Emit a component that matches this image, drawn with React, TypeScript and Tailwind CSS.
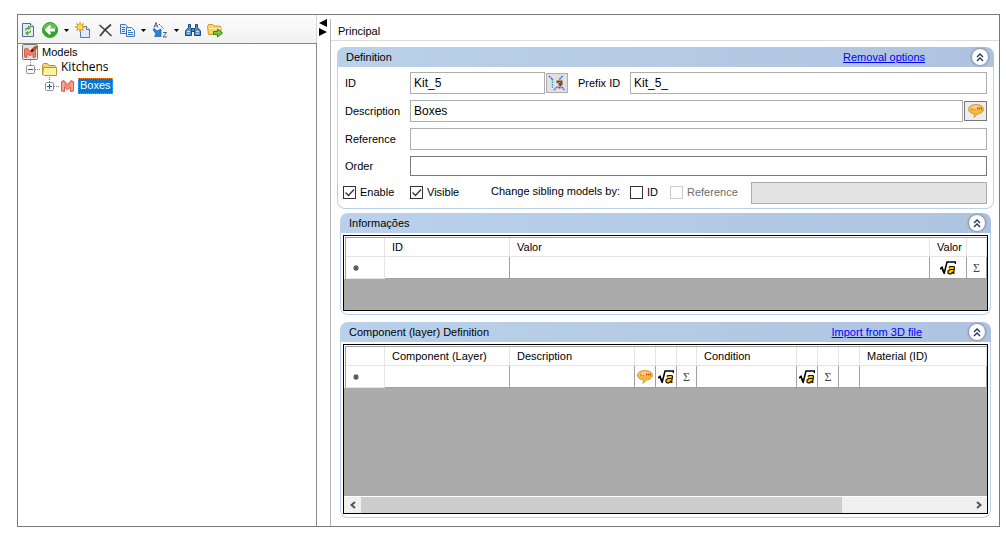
import React, { useState } from 'react';

const RefreshIcon = () => (
  <svg width="16" height="16" viewBox="0 0 16 16" fill="none">
    <path d="M2.500 1.500h8l3 3v10h-11z" fill="#e3edf7" stroke="#4f6f92" />
    <path d="M10.500 1.500v3h3" fill="#fff" stroke="#4f6f92" />
    <path d="M5.500 8.500c0-2 1-2.500 3.500-2.500M8 4l2 2-2 1.500M10.500 8.500c0 2-1 2.500-3.500 2.500M8 9.500L6 11l2 2" stroke="#5aa62a" strokeWidth="1.300" />
  </svg>
);

const BackIcon = () => (
  <svg width="16" height="16" viewBox="0 0 16 16">
    <circle cx="8" cy="8" r="7.500" fill="#2fa52c" stroke="#3f9a34" />
    <path d="M1.500 7a6.500 6 0 0 1 13 0c-3 1-9 1-13 0z" fill="#62c44e" />
    <path d="M7.500 3L2.500 8l5 5L9.300 11.300 7.500 9.500H13v-3H7.500l1.800-1.800z" fill="#fff" />
  </svg>
);

const NewIcon = () => (
  <svg width="16" height="16" viewBox="0 0 16 16">
    <path d="M5.500 4.500h6l3 3v8h-9z" fill="#dfeafb" stroke="#5779ad" />
    <path d="M11.500 4.500v3h3" fill="#fff" stroke="#5779ad" />
    <path d="M5 0v10M0 5h10M1.500 1.500l7 7M8.500 1.500l-7 7" stroke="#e79a20" strokeWidth="1.500" />
    <circle cx="5" cy="5" r="2.500" fill="#ffe46b" stroke="#f0ac2c" />
  </svg>
);

const DeleteIcon = () => (
  <svg width="16" height="16" viewBox="0 0 16 16" fill="none" stroke="#3c3c3c">
    <path d="M2.500 3C6 6 10 9.500 14.500 14" strokeWidth="1.500" />
    <path d="M14 2.500C9.500 6 6 9.500 3 14" strokeWidth="1.800" />
  </svg>
);

const CopyIcon = () => (
  <svg width="16" height="16" viewBox="0 0 16 16" stroke="#3e76bd">
    <path d="M1.500 2.500h5l2 2v7h-7z" fill="#d9e9fb" />
    <path d="M3 5.500h3M3 7.500h3M3 9.500h3" />
    <path d="M7.500 5.500h5l3 3v6h-8z" fill="#e8f2fd" />
    <path d="M9 8.500h3M9 10.500h5M9 12.500h5" />
  </svg>
);

const SortIcon = () => (
  <svg width="16" height="16" viewBox="0 0 16 16">
    <path d="M2 5.500L4 .5l2 5M2.800 4h2.500" fill="none" stroke="#4f5f75" />
    <path d="M7 2l5 5" stroke="#444" strokeDasharray="1.500 1" />
    <path d="M1 7.500l1.500-1L5 9l4-2v7.500H2.500L4 12z" fill="#2385dc" stroke="#1559a8" strokeWidth="0.700" />
    <path d="M11 10.500h3.500L11 15h4" fill="none" stroke="#4f5f75" />
  </svg>
);

const BinocularsIcon = () => (
  <svg width="16" height="16" viewBox="0 0 16 16" fill="#5a8fcb" stroke="#1d447c">
    <path d="M3.500 2.500h2v3l1 2v6H.500V9l3-3.500z" />
    <path d="M10.500 2.500h2v3l3 3.500v4.500h-6v-6l1-2z" />
    <path d="M6.500 6.500h3v3h-3z" />
    <path d="M2 9.500h3M11 9.500h3M2.500 11.500h2M11.500 11.500h2" stroke="#dce9f8" />
  </svg>
);

const FolderGoIcon = () => (
  <svg width="16" height="16" viewBox="0 0 16 16">
    <path d="M1.500 12.500l-1-8 1-2h4l1.500 1.500h6l1 2v6.500z" fill="#f6d766" stroke="#cf9b2c" />
    <path d="M2 6.500h12" stroke="#fff2b5" />
    <path d="M6.500 9.500h4v-2.500l5 4-5 4v-2.500h-4z" fill="#78c93c" stroke="#34851f" />
  </svg>
);

const FolderIcon = () => (
  <svg width="17" height="16" viewBox="0 0 17 16" stroke="#b99432">
    <path d="M1.500 13.500v-9l1-2h4l1.500 2h6v2h-8z" fill="#f3d46d" />
    <path d="M3.500 6.500h12v8h-12l-2-1 1-7z" fill="#fff0a2" />
  </svg>
);

const ModelIcon = () => (
  <svg width="15" height="14" viewBox="0 0 15 14">
    <path d="M1.500 2.500l2.500-1 3.500 4 3.500-4 2.500 1v9.500l-3 .500V8l-3 3-3-3v4.500l-3-.500z" fill="#f28b7a" stroke="#d9604c" />
    <path d="M3 4v7M12 4v7" stroke="#ffc4b8" />
  </svg>
);

const ModelsRootIcon = () => (
  <svg width="16" height="16" viewBox="0 0 16 16">
    <rect x="0.500" y="0.500" width="15" height="15" rx="1" fill="#e6e2e2" stroke="#777" />
    <path d="M2.500 5l2.500-1 3 3.500L11 4l2.500 1v8l-2.500.500V9.500L8 12 5 9.500v4L2.500 13z" fill="#f07f6c" stroke="#d9604c" />
    <path d="M8.500 7L12 2.500l3-1v3L10.500 8z" fill="#a65a28" />
    <path d="M8.500 7.500L10 5l2 1.500L10 8z" fill="#2b1a12" />
  </svg>
);

const BalloonIcon = () => (
  <svg width="16" height="16" viewBox="0 0 16 16">
    <path d="M8 1.500c4.200 0 7.500 2 7.500 4.800 0 2.500-2.500 4.300-6 4.700L6 14.500l.500-3.500C3 10.500.500 8.800.500 6.300.500 3.500 3.800 1.500 8 1.500z" fill="#f7b92e" stroke="#c48a35" strokeWidth="0.800" />
    <path d="M1.500 5.800C2.500 1 13.500 1 14.500 5.800 12 7.500 4 7.500 1.500 5.800z" fill="#fbc98a" />
    <path d="M3.500 4.500v2h2M6 6.500h1.500" fill="none" stroke="#c88b50" />
    <path d="M9 5.500h5" stroke="#e04a1c" strokeWidth="2" strokeDasharray="1.500 0.500" />
  </svg>
);

const GraphHelpIcon = () => (
  <svg width="18" height="18" viewBox="0 0 18 18" fill="none">
    <path d="M1 2l4 4M14.500 2l-3.500 4M6 16l4-4M12 11l4.500 5" stroke="#2e58dc" strokeWidth="1.300" strokeDasharray="2 0.700" />
    <path d="M4.500 5v10" stroke="#20a4dc" strokeWidth="1.400" strokeDasharray="1.500 1" />
    <path d="M9.500 9V7.500h4V10h-2v1.500" stroke="#7d4518" strokeWidth="2" />
    <path d="M10.500 12.500h2v2h-2z" fill="#7d4518" />
  </svg>
);

const FormulaIcon = () => (
  <svg width="16" height="16" viewBox="0 0 16 16" fill="none">
    <path d="M0 9l2-1.500L4 13" stroke="#000" strokeWidth="1.800" />
    <path d="M4 14L7 2h8.500v2" stroke="#000" strokeWidth="1.500" />
    <path d="M8.500 8V6.500h6.500l-1 7.500H8l-.500-2.500L9 9.500z" fill="#fbc400" />
    <path d="M9 7.500L10 6.500h4l.500 1-1 6h1M13.500 9.500H10L8 11v2l1 .800h2l2-1.800" stroke="#1c1600" strokeWidth="1.200" />
  </svg>
);

const StarMark = () => (
  <svg width="6" height="6" viewBox="0 0 6 6" className="ml-[7px]">
    <path d="M3 0v6M0 3h6M1 1l4 4M5 1L1 5" stroke="#555" strokeWidth="1.200" />
  </svg>
);

const DropArrow = ({ label }: { label: string }) => (
  <button aria-label={label}>
    <svg width="5" height="16" viewBox="0 0 5 16">
      <path d="M0 7h5L2.500 10z" fill="#000" />
    </svg>
  </button>
);

const Toolbar = () => (
  <div className="flex h-7 items-center gap-1.5 border-r border-[#d5d5d5] pl-0.5 pt-0.5 bg-linear-to-b from-[#fdfdfd] to-[#f1f1f1]">
    <button aria-label="Refresh"><RefreshIcon /></button>
    <button aria-label="Back"><BackIcon /></button>
    <DropArrow label="Back history" />
    <button aria-label="New"><NewIcon /></button>
    <button aria-label="Delete"><DeleteIcon /></button>
    <button aria-label="Copy"><CopyIcon /></button>
    <DropArrow label="Copy options" />
    <button aria-label="Sort"><SortIcon /></button>
    <DropArrow label="Sort options" />
    <button aria-label="Find"><BinocularsIcon /></button>
    <button aria-label="Move to folder"><FolderGoIcon /></button>
  </div>
);

interface ExpanderProps {
  open: boolean;
  label: string;
  onClick: () => void;
}

const Expander = ({ open, label, onClick }: ExpanderProps) => (
  <button aria-label={label} aria-expanded={open} onClick={onClick}>
    <svg width="19" height="17" viewBox="0 0 19 17" fill="none">
      <path d="M8.500 0v5M13 9.500h6" stroke="#808080" strokeDasharray="1 1" />
      <rect x="4.500" y="5.500" width="8" height="8" rx="1" fill="#fafafa" stroke="#8f8f8f" />
      <path d="M6 9.500h5" stroke="#3a53a4" />
      {!open && <path d="M8.500 7v5" stroke="#3a53a4" />}
    </svg>
  </button>
);

const ModelTree = () => {
  const [folderOpen, setFolderOpen] = useState(true);
  const [boxesOpen, setBoxesOpen] = useState(false);

  return (
    <div className="flex-1 border-t border-r border-[#828790] bg-white pl-1">
      <div className="flex h-4 items-center gap-1">
        <ModelsRootIcon />
        <span>Models</span>
      </div>
      <div className="flex h-[17px] items-center">
        <Expander open={folderOpen} label="Toggle Kitchens" onClick={() => setFolderOpen(!folderOpen)} />
        <FolderIcon />
        <span className="pb-1 pl-[3px] font-['Open_Sans',sans-serif] text-xs leading-[14px]">Kitchens</span>
      </div>
      {folderOpen && (
        <div className="flex h-[17px] items-center pl-[19px]">
          <Expander open={boxesOpen} label="Toggle Boxes" onClick={() => setBoxesOpen(!boxesOpen)} />
          <ModelIcon />
          <button className="ml-[3px] h-4 border border-dotted border-[#ff8728] bg-[#0078d7] px-px leading-[13px] text-white">
            Boxes
          </button>
        </div>
      )}
    </div>
  );
};

interface GroupProps {
  title: string;
  link?: string;
  className: string;
  children: React.ReactNode;
}

const Group = ({ title, link, className, children }: GroupProps) => {
  const [open, setOpen] = useState(true);

  return (
    <section className={className}>
      <div className="flex h-5 items-center rounded-t-lg bg-linear-to-r from-[#bad1eb] to-[#aec3df] pl-[9px] pr-1.5">
        <h2 className="flex-1">{title}</h2>
        {link && (
          <a href="#" className="mr-[47px] text-[#0000ff] underline">{link}</a>
        )}
        <button
          aria-label={`Collapse ${title}`}
          onClick={() => setOpen(!open)}
          className="flex size-4 items-center justify-center rounded-full bg-white shadow-[0_0_2px_1px_#848a9e]"
        >
          <svg width="8" height="9" viewBox="0 0 8 9" fill="none" stroke="#1c3668" strokeWidth="1.400">
            <path d="M1 4l3-3 3 3M1 8l3-3 3 3" />
          </svg>
        </button>
      </div>
      {open && (
        <div className="rounded-b-lg border border-t-0 border-[#b9d1ea]">{children}</div>
      )}
    </section>
  );
};

interface CheckProps {
  label: string;
  className: string;
  checked?: boolean;
  disabled?: boolean;
}

const Check = ({ label, className, checked, disabled }: CheckProps) => (
  <label className={`flex items-center gap-1 ${className}`}>
    <span className="relative flex size-[13px] shrink-0">
      <input
        type="checkbox"
        defaultChecked={checked}
        disabled={disabled}
        className="peer size-[13px] appearance-none border border-[#333] bg-white disabled:border-[#ccc]"
      />
      <svg
        viewBox="0 0 13 13"
        fill="none"
        stroke="#333"
        strokeWidth="1.300"
        className="pointer-events-none absolute inset-0 hidden size-[13px] peer-checked:block"
      >
        <path d="M2.500 6.500l3 3 5.500-6" />
      </svg>
    </span>
    {label}
  </label>
);

const labelClass = 'w-[67px] shrink-0 pl-0.5';
const inputClass = 'h-[22px] min-w-0 flex-1 border border-[#abadb3] bg-white px-[3px] text-xs outline-none';

const DefinitionForm = () => (
  <form className="flex flex-col gap-1.5 pt-[5px] pr-1.5 pb-1 pl-[5px]">
    <div className="flex items-center">
      <label htmlFor="model-id" className={labelClass}>ID</label>
      <input id="model-id" defaultValue="Kit_5" className="h-[22px] w-[135px] border border-[#abadb3] bg-white px-[3px] text-xs outline-none" />
      <button type="button" aria-label="Generate ID" className="ml-px flex h-5 w-[22px] items-center justify-center border border-[#adadad] bg-[#e1e1e1]">
        <GraphHelpIcon />
      </button>
      <label htmlFor="prefix-id" className="w-[62px] shrink-0 pl-2.5">Prefix ID</label>
      <input id="prefix-id" defaultValue="Kit_5_" className={inputClass} />
    </div>
    <div className="flex items-center">
      <label htmlFor="description" className={labelClass}>Description</label>
      <input id="description" defaultValue="Boxes" className={inputClass} />
      <button type="button" aria-label="Translate description" className="ml-px flex h-5 w-[23px] items-center justify-center border border-[#777] bg-[#eee]">
        <BalloonIcon />
      </button>
    </div>
    <div className="flex items-center">
      <label htmlFor="reference" className={labelClass}>Reference</label>
      <input id="reference" className={inputClass} />
    </div>
    <div className="flex items-center">
      <label htmlFor="order" className={labelClass}>Order</label>
      <input id="order" className="h-5 min-w-0 flex-1 border border-[#7a7a7a] bg-white px-[3px] text-xs outline-none" />
    </div>
    <div className="flex items-start">
      <Check label="Enable" checked className="w-[67px] pt-[3px]" />
      <Check label="Visible" checked className="w-[81px] pt-[3px]" />
      <span className="w-[139px] pt-0.5">Change sibling models by:</span>
      <Check label="ID" className="w-10 pt-[3px]" />
      <Check label="Reference" disabled className="w-[81px] pt-[3px] text-[#6d6d6d]" />
      <input
        aria-label="Sibling reference"
        disabled
        className="h-[22px] min-w-0 flex-1 border border-[#abadb3] bg-[#e3e3e3]"
      />
    </div>
  </form>
);

interface Column {
  title: string;
  width: string;
  cell?: React.ReactNode;
}

const sigma = <span className="font-['Liberation_Serif',serif] text-xs text-[#444]">Σ</span>;
const formula = <FormulaIcon />;

const infoColumns: Column[] = [
  { title: 'ID', width: 'w-[125px]' },
  { title: 'Valor', width: 'w-auto' },
  { title: 'Valor', width: 'w-[37px]', cell: formula },
  { title: '', width: 'w-5', cell: sigma },
];

const layerColumns: Column[] = [
  { title: 'Component (Layer)', width: 'w-[125px]' },
  { title: 'Description', width: 'w-[125px]' },
  { title: '', width: 'w-[21px]', cell: <BalloonIcon /> },
  { title: '', width: 'w-[21px]', cell: formula },
  { title: '', width: 'w-5', cell: sigma },
  { title: 'Condition', width: 'w-[100px]' },
  { title: '', width: 'w-[21px]', cell: formula },
  { title: '', width: 'w-[21px]', cell: sigma },
  { title: '', width: 'w-[21px]' },
  { title: 'Material (ID)', width: 'w-auto' },
];

const DataGrid = ({ columns }: { columns: Column[] }) => (
  <div className="bg-white pt-px pl-px">
    <table className="w-full table-fixed border-separate border-spacing-0 border-t border-l border-[#a0a0a0]">
      <thead>
        <tr className="h-[19px]">
          <th aria-label="Row" className="w-[39px] border-r border-b border-[#e5e5e5] p-0"></th>
          {columns.map((column, index) => (
            <th
              key={index}
              className={`${column.width} overflow-hidden border-r border-b border-[#e5e5e5] p-0 text-left font-normal whitespace-nowrap`}
            >
              <span className="pl-[7px]">{column.title}</span>
            </th>
          ))}
        </tr>
      </thead>
      <tbody>
        <tr className="h-[22px]">
          <td className="border-r border-b border-[#e5e5e5] p-0"><StarMark /></td>
          {columns.map((column, index) => (
            <td key={index} className="h-[22px] border-r border-b border-[#a0a0a0] p-0">
              <div className="flex items-center justify-center">{column.cell}</div>
            </td>
          ))}
        </tr>
      </tbody>
    </table>
  </div>
);

const ScrollBar = () => (
  <div className="flex h-[17px] border-t border-white bg-[#f0f0f0]">
    <button aria-label="Scroll left" className="flex w-[17px] items-center justify-center">
      <svg width="8" height="8" viewBox="0 0 8 8" fill="none" stroke="#555" strokeWidth="2">
        <path d="M6 1L2.500 4 6 7" />
      </svg>
    </button>
    <div className="flex-1">
      <div className="h-full w-[79%] bg-[#cdcdcd]"></div>
    </div>
    <button aria-label="Scroll right" className="flex w-[17px] items-center justify-center">
      <svg width="8" height="8" viewBox="0 0 8 8" fill="none" stroke="#555" strokeWidth="2">
        <path d="M2 1l3.500 3L2 7" />
      </svg>
    </button>
  </div>
);

const App = () => {
  return (
    <div className="bg-white pt-3.5 pr-1.5 pb-3 pl-[17px] font-['Liberation_Sans',Arial,sans-serif] text-[11px] leading-[14px] text-black">
      <div className="flex border border-[#7a7a7a]">
        {/* Left side - Toolbar and tree */}
        <aside className="flex w-[299px] shrink-0 flex-col">
          <Toolbar />
          <ModelTree />
        </aside>

        <div className="w-[13px] shrink-0 pt-1 pl-0.5">
          <button aria-label="Resize panels" className="block">
            <svg width="9" height="18" viewBox="0 0 9 18">
              <path d="M8 0v8L0 4zM0 9l8 4-8 4z" fill="#000" />
            </svg>
          </button>
        </div>

        {/* Right side - Model properties */}
        <main className="mt-1 min-w-0 flex-1 border-l border-[#b5b5b5] pb-2">
          <h1 className="h-[22px] border-b border-[#dcdcdc] pt-[5px] pl-[7px]">Principal</h1>

          <Group title="Definition" link="Removal options" className="mt-1.5 mr-[5px] ml-1.5">
            <DefinitionForm />
          </Group>

          <Group title="Informações" className="mt-1 mr-2 ml-[9px]">
            <div className="p-0.5 pb-[3px]">
              <div className="border border-black bg-[#ababab] pb-[31px]">
                <DataGrid columns={infoColumns} />
              </div>
            </div>
          </Group>

          <Group title="Component (layer) Definition" link="Import from 3D file" className="mt-[7px] mr-2 ml-[9px]">
            <div className="p-0.5 pb-[3px]">
              <div className="border border-black bg-[#ababab]">
                <DataGrid columns={layerColumns} />
                <div className="h-[108px]"></div>
                <ScrollBar />
              </div>
            </div>
          </Group>
        </main>
      </div>
    </div>
  );
};

export default App;
